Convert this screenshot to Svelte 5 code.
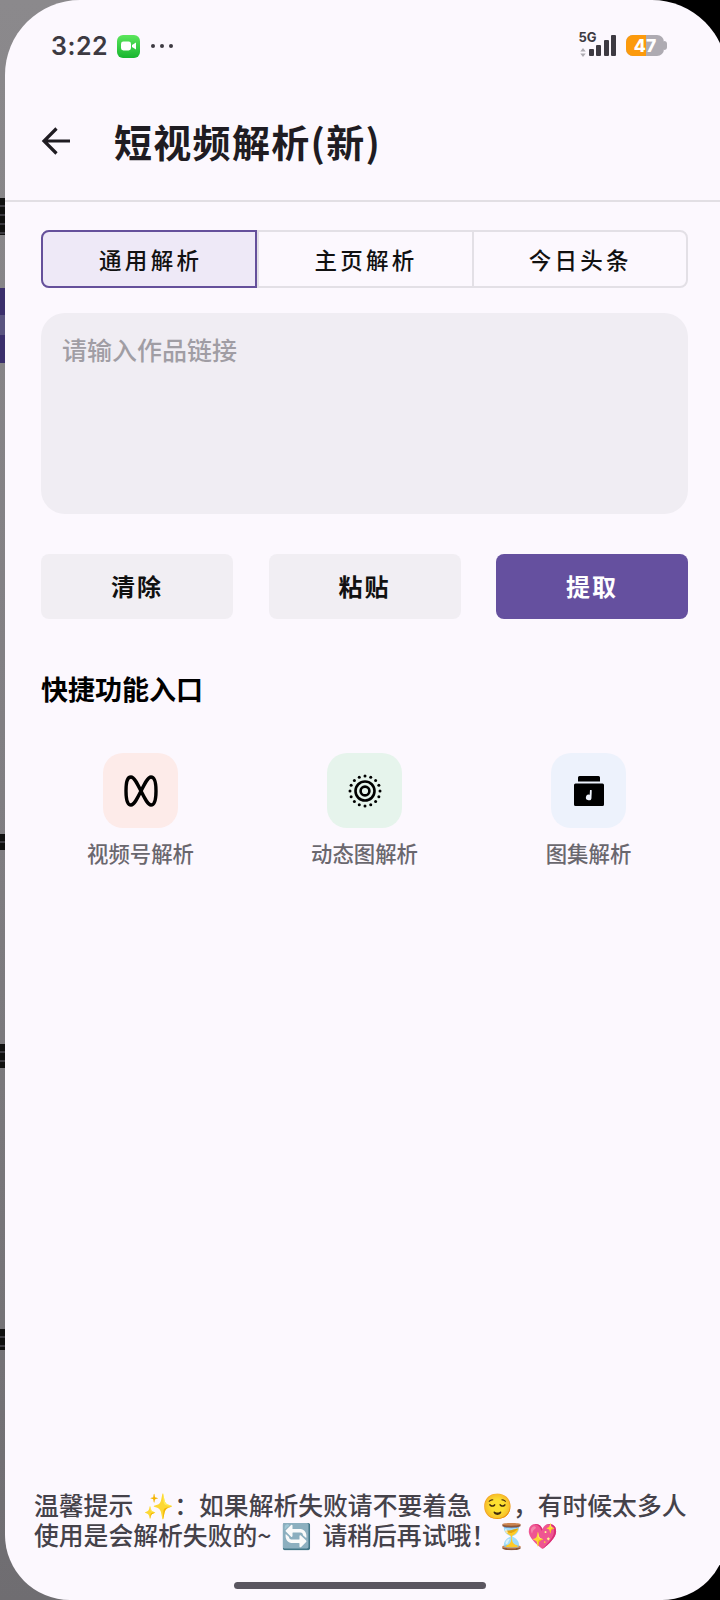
<script>
  const tabs = ['通用解析', '主页解析', '今日头条'];
  const actions = [
    { label: '清除', primary: false },
    { label: '粘贴', primary: false },
    { label: '提取', primary: true }
  ];
  const shortcuts = [
    { label: '视频号解析', tone: 'rose', icon: 'loop' },
    { label: '动态图解析', tone: 'mint', icon: 'rings' },
    { label: '图集解析', tone: 'sky', icon: 'album' }
  ];
  const tipLines = [
    '温馨提示 ✨：如果解析失败请不要着急 😌，有时候太多人',
    '使用是会解析失败的~ 🔄 请稍后再试哦！⏳💖'
  ];
  const dots = Array.from({ length: 16 }, (_, i) => {
    const a = (i / 16) * Math.PI * 2;
    return { x: 17 + 15 * Math.cos(a), y: 17 + 15 * Math.sin(a) };
  });
</script>

<div class="backdrop">
  <span class="peek glyph g1"></span>
  <span class="peek block"></span>
  <span class="peek glyph g2"></span>
  <span class="peek glyph g3"></span>
  <span class="peek glyph g4"></span>
</div>

<main class="sheet">
  <div class="status">
    <div class="status-left">
      <span class="time">3:22</span>
      <span class="facetime">
        <svg viewBox="0 0 16 12" width="16" height="12"><rect x="0" y="1.5" width="10" height="9" rx="2.4" fill="#fff"/><path d="M11 5l4-2.6v7.2L11 7z" fill="#fff"/></svg>
      </span>
      <span class="more"><i></i><i></i><i></i></span>
    </div>
    <div class="status-right">
      <div class="net">
        <span class="fiveg">5G</span>
        <svg class="arrows" viewBox="0 0 6 10" width="6" height="9"><path d="M3 0l3 4H0zM3 10L0 6h6z" fill="#aeabb2"/></svg>
      </div>
      <div class="bars"><i class="b1"></i><i class="b2"></i><i class="b3"></i><i class="b4"></i></div>
      <div class="battery"><span class="fill"></span><span class="num">47</span><span class="nub"></span></div>
    </div>
  </div>

  <header class="appbar">
    <svg class="back" viewBox="0 0 30 30" width="30" height="30" fill="none" stroke="#1f1c22" stroke-width="3.2"><path d="M29 15H3M15.500 2.500L3 15l12.500 12.500"/></svg>
    <h1>短视频解析(新)</h1>
  </header>

  <section class="content">
    <div class="tabs">
      {#each tabs as tab, i}
        <button class="tab" class:active={i === 0}>{tab}</button>
      {/each}
    </div>

    <div class="input"><span>请输入作品链接</span></div>

    <div class="actions">
      {#each actions as a}
        <button class="action" class:primary={a.primary}>{a.label}</button>
      {/each}
    </div>

    <h2>快捷功能入口</h2>
  </section>

  <div class="shortcuts">
    {#each shortcuts as s}
      <div class="shortcut">
        <div class="tile {s.tone}">
          {#if s.icon === 'loop'}
            <svg viewBox="0 0 34 32" width="34" height="32" fill="none" stroke="#000" stroke-width="3.4"><path d="M17 16C13 8 10 2 7 2 3.500 2 2 6 2 16s1.500 14 5 14c3 0 6-6 10-14 4-8 7-14 10-14 3.500 0 5 4 5 14s-1.500 14-5 14c-3 0-6-6-10-14z"/></svg>
          {:else if s.icon === 'rings'}
            <svg viewBox="0 0 34 34" width="34" height="34">
              {#each dots as d}<circle cx={d.x} cy={d.y} r="1.5" fill="#000"/>{/each}
              <circle cx="17" cy="17" r="9.500" fill="none" stroke="#000" stroke-width="2.600"/>
              <circle cx="17" cy="17" r="4.400" fill="none" stroke="#000" stroke-width="2.600"/>
            </svg>
          {:else}
            <svg viewBox="0 0 30 30" width="30" height="30"><path d="M4 5.500V1.500A1.500 1.500 0 0 1 5.500 0h19A1.500 1.500 0 0 1 26 1.500v4z" fill="#000"/><path d="M1.500 7.500h27A1.500 1.500 0 0 1 30 9v19.500a1.500 1.500 0 0 1-1.500 1.500h-27A1.500 1.500 0 0 1 0 28.500V9a1.500 1.500 0 0 1 1.500-1.500z" fill="#000"/><path d="M16 14h1.600c.3 1-.1 7.400-.1 7.400a2.800 2.800 0 1 1-1.800-2.600z" fill="#eff3fc"/></svg>
          {/if}
        </div>
        <span class="label">{s.label}</span>
      </div>
    {/each}
  </div>

  <div class="tip">
    {#each tipLines as line}
      <p>{line}</p>
    {/each}
  </div>

  <div class="home"></div>
</main>

<style>
  :global(body) {
    margin: 0;
    overflow: hidden;
  }

  .backdrop {
    position: absolute;
    inset: 0;
    width: 720px;
    height: 1600px;
    overflow: hidden;
    background:
      linear-gradient(90deg, transparent 0 360px, #000 360px),
      linear-gradient(180deg, #8b898c 0, #807e82 800px, #6f6d71 1600px);
  }

  .peek {
    position: absolute;
    left: 0;
    width: 5px;
  }

  .glyph { background: repeating-linear-gradient(180deg, #111 0 7px, #3c3a40 7px 9px); }
  .g1 { top: 198px; height: 37px; }
  .block {
    top: 288px;
    height: 75px;
    background: linear-gradient(180deg, #3b2f6c 0 27px, #5a5480 27px 47px, #3b2f6c 47px);
  }
  .g2 { top: 834px; height: 16px; }
  .g3 { top: 1044px; height: 24px; }
  .g4 { top: 1329px; height: 21px; }

  .sheet {
    position: relative;
    box-sizing: border-box;
    width: 722px;
    height: 1600px;
    margin-left: 5px;
    display: flex;
    flex-direction: column;
    background: #fcf8fe;
    border-radius: 75px 75px 65px 65px;
    font-family: "Noto Sans CJK SC", "Noto Sans", sans-serif;
    color: #111;
  }

  .status {
    height: 92px;
    display: flex;
    justify-content: space-between;
    align-items: center;
    padding: 0 60px 0 46px;
    box-sizing: border-box;
  }

  .status-left { display: flex; align-items: center; }
  .status-right { display: flex; align-items: flex-end; height: 22px; }

  .time {
    font-family: Inter, "Liberation Sans", sans-serif;
    font-size: 25px;
    font-weight: 600;
    color: #3d3a42;
    letter-spacing: 0.5px;
  }

  .facetime {
    width: 23px;
    height: 23px;
    margin-left: 9px;
    border-radius: 6px;
    background: linear-gradient(180deg, #5ce65c, #17b52f);
    display: flex;
    align-items: center;
    justify-content: center;
  }

  .more { display: flex; gap: 5px; margin-left: 11px; }
  .more i { width: 4px; height: 4px; border-radius: 50%; background: #3d3a42; }

  .net { display: flex; flex-direction: column; align-items: flex-start; gap: 4px; width: 18px; }
  .fiveg {
    font-family: Inter, "Liberation Sans", sans-serif;
    font-size: 13px;
    line-height: 13px;
    font-weight: 700;
    color: #3d3a42;
  }
  .arrows { margin-left: 1px; }

  .bars { display: flex; align-items: flex-end; gap: 2.500px; margin: 0 0 1px -8px; }
  .bars i { width: 5px; background: #3d3a42; border-radius: 1px; }
  .b1 { height: 7px; }
  .b2 { height: 11px; }
  .b3 { height: 16px; }
  .b4 { height: 21px; }

  .battery {
    position: relative;
    width: 38px;
    height: 21px;
    margin: 0 3px 1px 10px;
    border-radius: 7px;
    background: #aeabb2;
  }
  .fill {
    position: absolute;
    left: 0;
    top: 0;
    bottom: 0;
    width: 20px;
    background: #fc9a0c;
    border-radius: 7px 0 0 7px;
  }
  .num {
    position: absolute;
    inset: 0;
    text-align: center;
    font-family: Inter, "Liberation Sans", sans-serif;
    font-size: 17.500px;
    font-weight: 800;
    line-height: 21px;
    color: #fff;
  }
  .nub {
    position: absolute;
    right: -3px;
    top: 6px;
    width: 3px;
    height: 9px;
    border-radius: 0 4px 4px 0;
    background: #aeabb2;
  }

  .appbar {
    height: 110px;
    box-sizing: border-box;
    display: flex;
    align-items: center;
    padding: 0 0 10px 36px;
    border-bottom: 2px solid #e2dfe4;
  }

  h1 {
    margin: 0 0 0 43px;
    font-size: 38px;
    letter-spacing: 1.300px;
    line-height: 50px;
    font-weight: 700;
    color: #1f1c22;
  }

  .content { padding: 28px 39px 0 36px; }

  .tabs {
    display: grid;
    grid-template-columns: repeat(3, 1fr);
    height: 58px;
    box-sizing: border-box;
    border: 2px solid #e3e0e6;
    border-radius: 8px;
  }

  .tab {
    font: inherit;
    font-size: 22.500px;
    font-weight: 500;
    letter-spacing: 3.300px;
    color: #111;
    background: transparent;
    border: 0;
    padding: 0 0 0 1px;
    border-left: 2px solid #e3e0e6;
  }
  .tab:first-child { border-left: 0; }
  .tab.active {
    margin: -2px 0 -2px -2px;
    padding-left: 3px;
    background: #eee9f7;
    border: 2px solid #65509b;
    border-radius: 8px 0 0 8px;
  }

  .input {
    margin-top: 25px;
    height: 201px;
    box-sizing: border-box;
    padding: 20px 21px;
    background: #f0edf3;
    border-radius: 24px;
    font-size: 25px;
    line-height: 32px;
    font-weight: 500;
    color: #a09da4;
  }

  .actions {
    display: grid;
    grid-template-columns: repeat(3, 192px);
    justify-content: space-between;
    margin-top: 40px;
  }

  .action {
    font: inherit;
    height: 65px;
    border: 0;
    padding: 0 0 3px;
    border-radius: 8px;
    background: #f1eef3;
    color: #111;
    font-size: 24px;
    font-weight: 700;
    letter-spacing: 2px;
  }
  .action.primary { background: #65509f; color: #fff; }

  h2 {
    margin: 52px 0 0;
    font-size: 27px;
    line-height: 36px;
    font-weight: 700;
    color: #000;
  }

  .shortcuts {
    display: grid;
    grid-template-columns: repeat(3, 224px);
    padding-left: 23.500px;
    margin-top: 46px;
  }

  .shortcut { display: flex; flex-direction: column; align-items: center; }

  .tile {
    width: 75px;
    height: 75px;
    border-radius: 20px;
    display: flex;
    align-items: center;
    justify-content: center;
  }
  .rose { background: #fdebe9; }
  .mint { background: #e6f4ec; }
  .sky { background: #edf2fc; }

  .label {
    margin-top: 11px;
    font-size: 21.400px;
    line-height: 28px;
    font-weight: 500;
    color: #6a676e;
  }

  .tip {
    margin: auto 0 0;
    padding: 0 0 0 29px;
    font-size: 24.800px;
    word-spacing: 4.500px;
    line-height: 30px;
    font-weight: 500;
    color: #45424a;
  }
  .tip p { margin: 0; height: 30px; white-space: nowrap; }

  .home {
    flex: none;
    width: 252px;
    height: 7px;
    margin: 33px 0 11px 229px;
    border-radius: 4px;
    background: #5a5660;
  }
</style>
